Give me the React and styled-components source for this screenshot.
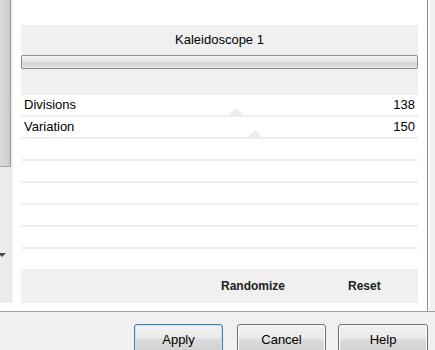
import React from 'react'
import styled, { createGlobalStyle } from 'styled-components'

const GlobalStyle = createGlobalStyle`
    html, body {
        margin: 0;
        padding: 0;
        background: #f0f0f0;
    }
    * {
        box-sizing: border-box;
    }
`

const Window = styled.div`
    width: 435px;
    height: 350px;
    overflow: hidden;
    display: flex;
    flex-direction: column;
    background: #f0f0f0;
    font-family: "Liberation Sans", Arial, sans-serif;
    color: #000;
`
const Body = styled.div`
    height: 311px;
    flex-shrink: 0;
    display: flex;
`
const ScrollCol = styled.div`
    width: 13px;
    display: flex;
    flex-direction: column;
    background: #fff;
`
const Track = styled.div`
    position: relative;
    height: 303px;
    background: #ececec;
    border-right: 1px solid #f6f6f6;
`
const Thumb = styled.div`
    width: 11px;
    height: 167px;
    background: linear-gradient(90deg, #dcdcdc, #d2d2d2 70%, #c8c8c8);
    border-right: 1px solid #9c9c9c;
    border-bottom: 1px solid #a8a8a8;
`
const DownArrow = styled.div`
    position: absolute;
    left: -2px;
    top: 253px;
    width: 0;
    height: 0;
    border-left: 4px solid transparent;
    border-right: 4px solid transparent;
    border-top: 4px solid #4a4a4a;
`
const Panel = styled.div`
    flex: 1;
    background: #fff;
    border-right: 1px solid #8c8c8c;
    padding: 25px 9px 8px 8px;
    display: flex;
    flex-direction: column;
`
const Gutter = styled.div`
    width: 7px;
    background: #f0f0f0;
    box-shadow: inset 2px 0 0 #fff;
`
const Header = styled.div`
    height: 70px;
    background: #f0f0f0;
    display: flex;
    flex-direction: column;
    align-items: center;
    padding-top: 7px;
`
const Title = styled.div`
    font-size: 13px;
    line-height: 16px;
`
const SliderBar = styled.div`
    margin-top: 7px;
    width: 100%;
    height: 14px;
    border: 1px solid #8e8e8e;
    border-radius: 2px;
    background: linear-gradient(#f6f6f6, #e8e8e8 40%, #d4d4d4 60%, #e2e2e2);
`
const Row = styled.div`
    position: relative;
    height: 22px;
    border-bottom: 2px solid #eeeeee;
    display: flex;
    align-items: center;
    justify-content: space-between;
    padding: 0 3px 1px 3px;
    font-size: 13px;
`
const Marker = styled.div`
    position: absolute;
    bottom: -1px;
    width: 0;
    height: 0;
    border-left: 8px solid transparent;
    border-right: 8px solid transparent;
    border-bottom: 8px solid #ececec;
`
const Spacer = styled.div`
    flex: 1;
`
const ActionBand = styled.div`
    height: 34px;
    background: #f0f0f0;
    display: flex;
    align-items: center;
    padding-left: 200px;
    gap: 63px;
    font-size: 12px;
    font-weight: bold;
    color: #222;
`
const Footer = styled.div`
    flex: 1;
    min-height: 0;
    overflow: hidden;
    border-top: 1px solid #a0a0a0;
    display: flex;
    justify-content: flex-end;
    align-items: flex-start;
    padding: 12px 7px 0 0;
`
const Button = styled.button`
    flex-shrink: 0;
    width: ${props => props.w}px;
    height: 30px;
    margin-right: ${props => props.gap || 0}px;
    border: 1px solid ${props => props.primary ? '#3c7fb1' : '#707070'};
    border-radius: 3px;
    background: linear-gradient(#f2f2f2 0%, #ebebeb 45%, #dddddd 50%, #cfcfcf 100%);
    box-shadow: inset 0 0 0 1px ${props => props.primary ? '#c8e2f4' : '#fbfbfb'};
    font-family: "Liberation Sans", Arial, sans-serif;
    font-size: 13px;
    color: #000;
    padding: 0;
`

const rows = [
    { label: 'Divisions', value: 138, marker: 207 },
    { label: 'Variation', value: 150, marker: 226 },
    {}, {}, {}, {}, {},
]

const App = () => {
    return (
        <Window>
            <GlobalStyle />
            <Body>
                <ScrollCol>
                    <Track>
                        <Thumb />
                        <DownArrow />
                    </Track>
                </ScrollCol>
                <Panel>
                    <Header>
                        <Title>Kaleidoscope 1</Title>
                        <SliderBar />
                    </Header>
                    {rows.map((r, i) => (
                        <Row key={i}>
                            <span>{r.label}</span>
                            <span>{r.value}</span>
                            {r.marker && <Marker style={{ left: r.marker }} />}
                        </Row>
                    ))}
                    <Spacer />
                    <ActionBand>
                        <span>Randomize</span>
                        <span>Reset</span>
                    </ActionBand>
                </Panel>
                <Gutter />
            </Body>
            <Footer>
                <Button w={89} gap={14} primary>Apply</Button>
                <Button w={89} gap={12}>Cancel</Button>
                <Button w={90}>Help</Button>
            </Footer>
        </Window>
    )
}

export default App
